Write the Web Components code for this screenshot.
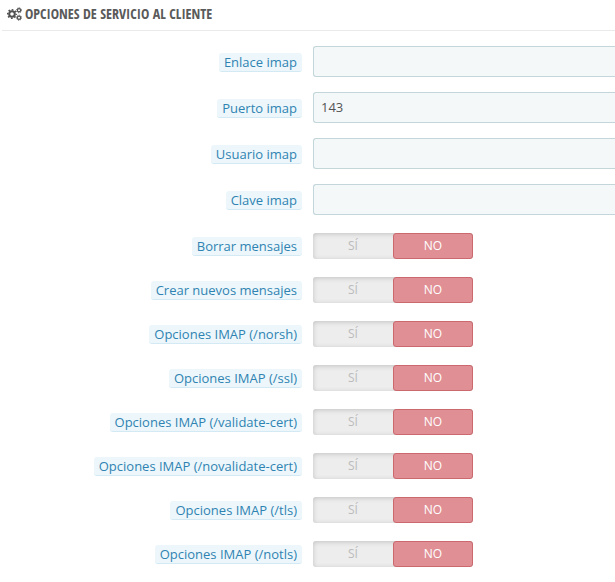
<!DOCTYPE html>
<html lang="es">
<head>
<meta charset="utf-8">
<title>Opciones de servicio al cliente</title>
<style>
body { margin: 0; background: #fff; color: #555; font: 13px/18px "Open Sans", "Noto Sans", sans-serif; }
</style>
</head>
<body>
<options-panel>
  <panel-heading slot="heading">OPCIONES DE SERVICIO AL CLIENTE</panel-heading>
  <text-field name="url">Enlace imap</text-field>
  <text-field name="port" value="143">Puerto imap</text-field>
  <text-field name="user">Usuario imap</text-field>
  <text-field name="password">Clave imap</text-field>
  <switch-field name="delete">Borrar mensajes</switch-field>
  <switch-field name="create">Crear nuevos mensajes</switch-field>
  <switch-field name="norsh">Opciones IMAP (/norsh)</switch-field>
  <switch-field name="ssl">Opciones IMAP (/ssl)</switch-field>
  <switch-field name="validate">Opciones IMAP (/validate-cert)</switch-field>
  <switch-field name="novalidate">Opciones IMAP (/novalidate-cert)</switch-field>
  <switch-field name="tls">Opciones IMAP (/tls)</switch-field>
  <switch-field name="notls">Opciones IMAP (/notls)</switch-field>
</options-panel>

<script>
const rowStyle = `
  *, *::before { box-sizing: border-box; }
  :host { display: grid; grid-template-columns: minmax(0, 302px) minmax(0, 1fr); column-gap: 11px; align-items: center; }
  .name { justify-self: end; padding: 0 5px; border-bottom: 1px solid #d3eaf5; border-radius: 3px;
    background: #edf7fb; color: #2f83b2; line-height: 18px; white-space: nowrap; }
`;

class OptionsPanel extends HTMLElement {
  constructor() {
    super();
    this.attachShadow({ mode: 'open' }).innerHTML = `
      <style>
        :host { display: block; overflow: hidden; }
        form { display: flex; flex-direction: column; padding: 15px 0; }
      </style>
      <slot name="heading"></slot>
      <form><slot></slot></form>`;
  }
}

class PanelHeading extends HTMLElement {
  constructor() {
    super();
    this.attachShadow({ mode: 'open' }).innerHTML = `
      <style>
        :host { display: block; margin-left: 2px; border-bottom: 1px solid #eaeaea; }
        h1 { display: flex; align-items: center; gap: 3px; margin: 0; padding: 4px 0 6px 5px; color: #5a5a5a;
          font: 400 14px/20px "Ubuntu Condensed", "Liberation Sans Narrow", "Open Sans Condensed", "Roboto Condensed", "Open Sans", sans-serif; }
        svg { width: 15px; height: 14px; flex: none; fill: none; stroke: #505050; }
      </style>
      <h1><svg viewBox="0 0 15 14" aria-hidden="true">
        <circle cx="5" cy="7" r="2.8" stroke-width="2"/>
        <circle cx="5" cy="7" r="4.3" stroke-width="1.6" stroke-dasharray="1.7 1.677" stroke-dashoffset=".85"/>
        <circle cx="12" cy="3.3" r="1.6" stroke-width="1.2"/>
        <circle cx="12" cy="3.3" r="2.5" stroke-width="1" stroke-dasharray="1 .963"/>
        <circle cx="12" cy="10.7" r="1.6" stroke-width="1.2"/>
        <circle cx="12" cy="10.7" r="2.5" stroke-width="1" stroke-dasharray="1 .963"/>
      </svg><slot></slot></h1>`;
  }
}

class TextField extends HTMLElement {
  constructor() {
    super();
    this.attachShadow({ mode: 'open' }).innerHTML = `
      <style>${rowStyle}
        :host { margin-bottom: 15px; }
        .name { margin-top: 2px; }
        input { width: 100%; height: 31px; margin: 0; padding: 5px 7px 7px; border: 1px solid #c3d6da; border-right: 0;
          border-radius: 3px 0 0 3px; background: #f4f8f9; color: #555; font: inherit; outline: none; }
        input:focus { border-color: #66afe9; }
      </style>
      <label class="name" for="control"><slot></slot></label>
      <input id="control" type="text">`;
    const input = this.shadowRoot.querySelector('input');
    input.name = this.getAttribute('name');
    input.value = this.getAttribute('value') || '';
  }
}

class SwitchField extends HTMLElement {
  constructor() {
    super();
    this.attachShadow({ mode: 'open' }).innerHTML = `
      <style>${rowStyle}
        :host { padding: 3px 0 15px; }
        .switch { display: grid; grid-template-columns: 1fr 1fr; width: 160px; height: 26px; border-radius: 3px;
          background: #ededed; box-shadow: inset 0 1px 5px #c2c2c2; }
        .switch label { display: flex; position: relative; justify-content: center; align-items: center;
          padding-bottom: 1px; border: 1px solid transparent; border-radius: 3px; color: #bbb; font-size: 12px; line-height: 23px; }
        input { appearance: none; position: absolute; inset: 0; margin: 0; }
        label:has(input:checked) { border-color: #cb696e; background: #e08f95; color: #fff; }
        label:has(input[value="1"]:checked) { border-color: #67a967; background: #92d097; }
      </style>
      <span class="name" id="name"><slot></slot></span>
      <div class="switch" role="radiogroup" aria-labelledby="name">
        <label for="yes"><input id="yes" type="radio" value="1">SÍ</label>
        <label for="no"><input id="no" type="radio" value="0" checked>NO</label>
      </div>`;
    this.shadowRoot.querySelectorAll('input').forEach(i => { i.name = this.getAttribute('name'); });
    this.shadowRoot.querySelector('#no').checked = true;
  }
}

customElements.define('options-panel', OptionsPanel);
customElements.define('panel-heading', PanelHeading);
customElements.define('text-field', TextField);
customElements.define('switch-field', SwitchField);
</script>
</body>
</html>
